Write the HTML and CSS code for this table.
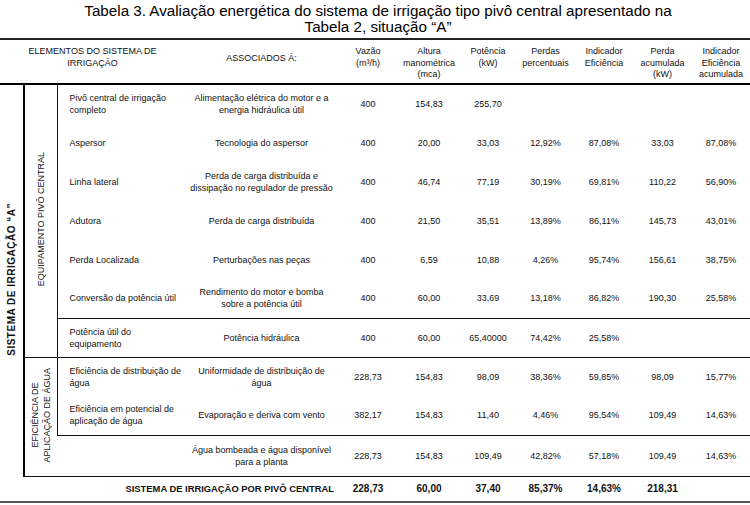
FILE: index.html
```html
<!DOCTYPE html>
<html lang="pt">
<head>
<meta charset="utf-8">
<title>Tabela 3</title>
<link rel="stylesheet" href="styles.css">
</head>
<body>
<h1 class="title">Tabela 3. Avaliação energética do sistema de irrigação tipo pivô central apresentado na<br>Tabela 2, situação “A”</h1>
<table class="tbl">
  <colgroup>
    <col class="c0"><col class="c1"><col class="c2"><col class="c3"><col class="c4"><col class="c5"><col class="c6"><col class="c7"><col class="c8"><col class="c9"><col class="c10">
  </colgroup>
  <thead>
    <tr class="head">
      <th colspan="3">ELEMENTOS DO SISTEMA DE<br>IRRIGAÇÃO</th>
      <th class="single">ASSOCIADOS À:</th>
      <th>Vazão<br>(m³/h)</th>
      <th>Altura<br>manométrica<br>(mca)</th>
      <th>Potência<br>(kW)</th>
      <th>Perdas<br>percentuais</th>
      <th>Indicador<br>Eficiência</th>
      <th>Perda<br>acumulada<br>(kW)</th>
      <th>Indicador<br>Eficiência<br>acumulada</th>
    </tr>
  </thead>
  <tbody>
    <tr class="row">
      <td rowspan="10" class="sys"><span class="vt strong">SISTEMA DE IRRIGAÇÃO “A”</span></td>
      <td rowspan="7" class="grp"><span class="vt">EQUIPAMENTO PIVÔ CENTRAL</span></td>
      <td class="el">Pivô central de irrigação completo</td>
      <td class="as">Alimentação elétrica do motor e a energia hidráulica útil</td>
      <td>400</td><td>154,83</td><td>255,70</td><td></td><td></td><td></td><td></td>
    </tr>
    <tr class="row">
      <td class="el">Aspersor</td>
      <td class="as">Tecnologia do aspersor</td>
      <td>400</td><td>20,00</td><td>33,03</td><td>12,92%</td><td>87,08%</td><td>33,03</td><td>87,08%</td>
    </tr>
    <tr class="row">
      <td class="el">Linha lateral</td>
      <td class="as">Perda de carga distribuída e dissipação no regulador de pressão</td>
      <td>400</td><td>46,74</td><td>77,19</td><td>30,19%</td><td>69,81%</td><td>110,22</td><td>56,90%</td>
    </tr>
    <tr class="row">
      <td class="el">Adutora</td>
      <td class="as">Perda de carga distribuída</td>
      <td>400</td><td>21,50</td><td>35,51</td><td>13,89%</td><td>86,11%</td><td>145,73</td><td>43,01%</td>
    </tr>
    <tr class="row">
      <td class="el">Perda Localizada</td>
      <td class="as">Perturbações nas peças</td>
      <td>400</td><td>6,59</td><td>10,88</td><td>4,26%</td><td>95,74%</td><td>156,61</td><td>38,75%</td>
    </tr>
    <tr class="row">
      <td class="el">Conversão da potência útil</td>
      <td class="as">Rendimento do motor e bomba sobre a potência útil</td>
      <td>400</td><td>60,00</td><td>33,69</td><td>13,18%</td><td>86,82%</td><td>190,30</td><td>25,58%</td>
    </tr>
    <tr class="row ruled">
      <td class="el">Potência útil do equipamento</td>
      <td class="as">Potência hidráulica</td>
      <td>400</td><td>60,00</td><td>65,40000</td><td>74,42%</td><td>25,58%</td><td></td><td></td>
    </tr>
    <tr class="row ruled">
      <td rowspan="3" class="grp2"><span class="vt">EFICIÊNCIA DE<br>APLICAÇÃO DE ÁGUA</span></td>
      <td class="el boxed">Eficiência de distribuição de água</td>
      <td class="as">Uniformidade de distribuição de água</td>
      <td>228,73</td><td>154,83</td><td>98,09</td><td>38,36%</td><td>59,85%</td><td>98,09</td><td>15,77%</td>
    </tr>
    <tr class="row">
      <td class="el boxed">Eficiência em potencial de aplicação de água</td>
      <td class="as">Evaporação e deriva com vento</td>
      <td>382,17</td><td>154,83</td><td>11,40</td><td>4,46%</td><td>95,54%</td><td>109,49</td><td>14,63%</td>
    </tr>
    <tr class="row ruled closed last">
      <td class="el"></td>
      <td class="as">Água bombeada e água disponível para a planta</td>
      <td>228,73</td><td>154,83</td><td>109,49</td><td>42,82%</td><td>57,18%</td><td>109,49</td><td>14,63%</td>
    </tr>
    <tr class="total">
      <td colspan="4" class="tot-label">SISTEMA DE IRRIGAÇÃO POR PIVÔ CENTRAL</td>
      <td>228,73</td><td>60,00</td><td>37,40</td><td>85,37%</td><td>14,63%</td><td>218,31</td><td></td>
    </tr>
  </tbody>
</table>
</body>
</html>
```
FILE: styles.css
```css
html, body {
  margin: 0;
  padding: 0;
  background: #fff;
}
body {
  font-family: "Liberation Sans", Arial, sans-serif;
  color: #111;
}
.title {
  margin: 3px 0 0;
  padding-left: 6px;
  font-size: 15.2px;
  font-weight: normal;
  line-height: 15.7px;
  text-align: center;
  color: #000;
}
.tbl {
  margin-top: 3.6px;
  width: 750px;
  table-layout: fixed;
  border-collapse: collapse;
  font-size: 9px;
  line-height: 12px;
}
.c0 { width: 24px; }
.c1 { width: 33px; }
.c2 { width: 128px; }
.c3 { width: 153px; }
.c4 { width: 60px; }
.c5 { width: 62px; }
.c6 { width: 56px; }
.c7 { width: 59px; }
.c8 { width: 58px; }
.c9 { width: 59px; }
.c10 { width: 58px; }

.tbl th, .tbl td {
  padding: 0 2px;
  text-align: center;
  vertical-align: middle;
}
.head th {
  font-weight: normal;
  line-height: 11.5px;
  height: 37px;
  padding-top: 6px;
  vertical-align: top;
  border-top: 2px solid #222;
  border-bottom: 2px solid #000;
}
.head th.single {
  vertical-align: middle;
  padding-top: 0;
  padding-bottom: 5px;
}
.row { height: 39px; }
.row.last { height: 41px; }
.row td.el {
  text-align: left;
  padding-left: 12px;
}
.ruled td { border-top: 1px solid #111; }
.closed td { border-bottom: 1px solid #111; }
.sys {
  border-right: 2px solid #000;
  padding: 0 0 38px;
}
.grp {
  border-right: 1px solid #111;
  padding: 0;
}
.grp2 {
  border-top: 1px solid #111;
  border-bottom: 1px solid #111;
  padding: 0;
}
.boxed { border-left: 1px solid #111; }
.vt {
  display: inline-block;
  writing-mode: vertical-rl;
  transform: rotate(180deg);
  white-space: nowrap;
  line-height: 12px;
}
.strong {
  font-weight: bold;
  font-size: 10px;
  letter-spacing: 0.5px;
}
.total { height: 26px; }
.total td {
  font-weight: bold;
  font-size: 10px;
  border-bottom: 2px solid #555;
}
.total td.tot-label {
  font-size: 9.4px;
  text-align: right;
  padding-right: 4px;
}
```
